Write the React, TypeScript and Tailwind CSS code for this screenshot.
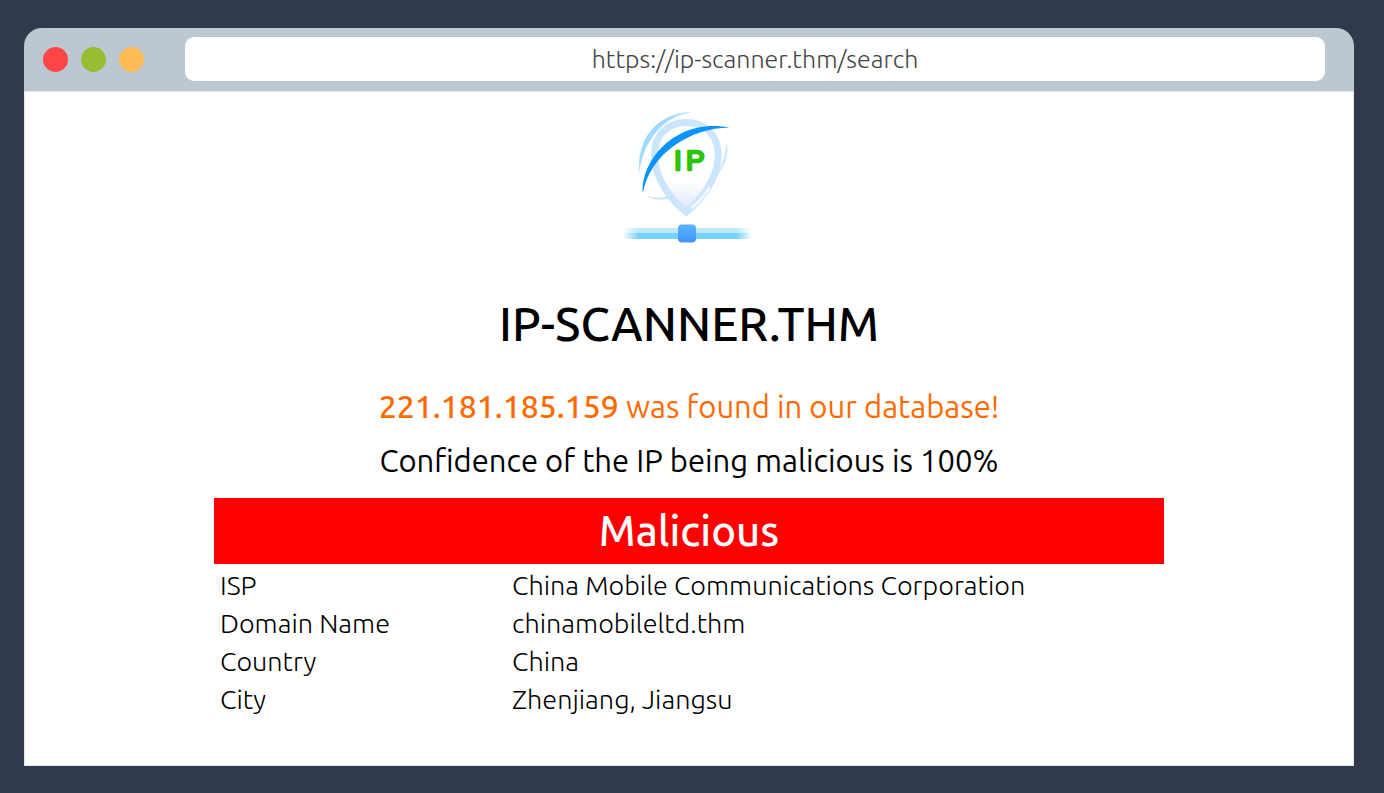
import React from "react";

type Detail = { label: string; value: string };

const details: Detail[] = [
  { label: "ISP", value: "China Mobile Communications Corporation" },
  { label: "Domain Name", value: "chinamobileltd.thm" },
  { label: "Country", value: "China" },
  { label: "City", value: "Zhenjiang, Jiangsu" },
];

function ScannerLogo() {
  return (
    <svg
      className="h-[140px] w-[140px]"
      viewBox="0 0 140 140"
      role="img"
      aria-label="IP scanner"
    >
      <defs>
        <linearGradient id="pin" x1="0" y1="0" x2="0" y2="1">
          <stop offset="0.65" stopColor="#ffffff" />
          <stop offset="1" stopColor="#dbe6fb" />
        </linearGradient>
        <linearGradient id="lineTop" x1="0" y1="0" x2="1" y2="0">
          <stop offset="0" stopColor="#bde8ff" stopOpacity="0" />
          <stop offset="0.12" stopColor="#bde8ff" />
          <stop offset="0.88" stopColor="#bde8ff" />
          <stop offset="1" stopColor="#bde8ff" stopOpacity="0" />
        </linearGradient>
        <linearGradient id="lineBottom" x1="0" y1="0" x2="1" y2="0">
          <stop offset="0" stopColor="#77d2ff" stopOpacity="0" />
          <stop offset="0.12" stopColor="#77d2ff" />
          <stop offset="0.88" stopColor="#77d2ff" />
          <stop offset="1" stopColor="#77d2ff" stopOpacity="0" />
        </linearGradient>
        <linearGradient id="node" x1="0" y1="0" x2="0" y2="1">
          <stop offset="0" stopColor="#5ab4ff" />
          <stop offset="1" stopColor="#3e94fa" />
        </linearGradient>
      </defs>
      <path
        d="M20.500 67 C18 36 37 10 70 8.500 C46 12 24 36 20.500 67 Z"
        fill="#9edaff"
        stroke="#b4e2ff"
        strokeWidth="0.6"
      />
      <path
        d="M107.500 40 C109.500 50 107 60 99 70 C103 61 106.500 52 107.500 40 Z"
        fill="#cbe6ff"
        stroke="#d8ecff"
        strokeWidth="0.8"
      />
      <path
        d="M27.500 91.500 C33 94.500 43 94 51 91.500 L54 94 C43 96.500 32 96.500 27.500 91.500 Z"
        fill="#cfe6ff"
      />
      <path
        d="M67.300 108 C53 97 35.500 75 35.500 51 C35.500 31 48.500 18.500 67.300 18.500 C86 18.500 99.200 31 99.200 51 C99.200 75 81 97 67.300 108 Z"
        fill="url(#pin)"
        stroke="#cbe5ff"
        strokeWidth="7"
      />
      <path
        d="M90 84 C86 91 80 98 73 103.500"
        fill="none"
        stroke="#f4f9ff"
        strokeWidth="2.6"
        strokeLinecap="round"
      />
      <path
        d="M24 89 C21 58 56 13 110.500 23.500 C72 24 31 49 24 89 Z"
        fill="#0a93fb"
      />
      <text
        y="65.500"
        className="font-['Liberation_Sans'] text-[28px]"
        fill="#2cc406"
        stroke="#2cc406"
        strokeWidth="2.4"
        strokeLinejoin="round"
      >
        <tspan x="55">I</tspan>
        <tspan x="67">P</tspan>
      </text>
      <rect x="4" y="124" width="129" height="6" fill="url(#lineTop)" />
      <rect x="4" y="129" width="129" height="6" fill="url(#lineBottom)" />
      <rect x="59" y="120.500" width="18" height="18" rx="4" fill="url(#node)" />
    </svg>
  );
}

export default function App() {
  return (
    <div className="flex min-h-screen flex-col bg-[#31394d] px-6 pt-7 pb-[27px] font-[Ubuntu,'Noto_Sans',sans-serif] text-black sm:pr-[30px]">
      <div className="flex flex-1 flex-col overflow-hidden rounded-t-[18px]">
        <header className="flex h-[63px] items-center bg-[#bbc7d1] pr-[29px] pl-[19px]">
          <div className="flex shrink-0 gap-[13px]">
            <button type="button" aria-label="Close" className="size-[25px] rounded-full bg-[#ff4545]" />
            <button type="button" aria-label="Minimize" className="size-[25px] rounded-full bg-[#98bc32]" />
            <button type="button" aria-label="Maximize" className="size-[25px] rounded-full bg-[#ffbb55]" />
          </div>
          <input
            type="text"
            aria-label="Address"
            defaultValue="https://ip-scanner.thm/search"
            className="mb-px ml-[41px] h-11 min-w-0 flex-1 rounded-[9px] bg-white text-center text-[25px] font-light text-[#444444] outline-none"
          />
        </header>

        <main className="flex flex-1 flex-col items-center border border-[#e3e6ec] bg-white px-4 pt-3 pb-10">
          <ScannerLogo />
          <h1 className="mt-12 text-[47px] leading-[64px] font-medium">IP-SCANNER.THM</h1>
          <p className="mt-7 text-center text-[31px] leading-[44px] text-[#ff6a00]">
            <strong className="text-[32px] font-medium">221.181.185.159</strong> was found in our database!
          </p>
          <p className="mt-2.5 text-center text-[31px] leading-[44px]">
            Confidence of the IP being malicious is 100%
          </p>
          <section className="mt-[15px] w-full max-w-[950px]">
            <h2 className="bg-[#ff0000] text-center text-[42px] leading-[66px] font-medium text-white">
              Malicious
            </h2>
            <table className="mt-0.5 w-full table-fixed text-left text-[27px] leading-[38px] font-light">
              <tbody>
                {details.map((d) => (
                  <tr key={d.label}>
                    <th scope="row" className="w-[292px] pl-1.5 font-light">
                      {d.label}
                    </th>
                    <td className="pl-1.5">{d.value}</td>
                  </tr>
                ))}
              </tbody>
            </table>
          </section>
        </main>
      </div>
    </div>
  );
}
